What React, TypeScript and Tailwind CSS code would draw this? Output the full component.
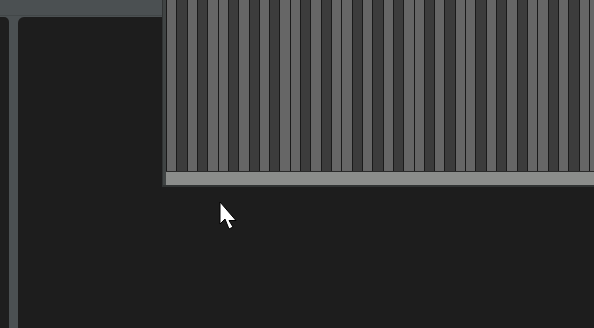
import React from "react";

const BLACK = [1, 3, 6, 8, 10];

export default function App() {
  const keys = Array.from({ length: 42 }, (_, i) => BLACK.includes(i % 12));
  return (
    <div className="relative flex h-[328px] w-[594px] overflow-hidden bg-[#1d1d1d]">
      {/* left column */}
      <div className="flex h-full w-[162px] shrink-0 flex-col bg-[#4b5052]">
        <div className="h-[15px] shrink-0" />
        <div className="h-[1px] shrink-0 bg-[#424748]" />
        <div className="flex flex-1 pt-[1px]">
          <div className="w-[9px] rounded-tr-[5px] bg-[#1e1e1e]" />
          <div className="w-[9px]" />
          <div className="flex-1 rounded-tl-[6px] bg-[#1d1d1d]" />
        </div>
      </div>

      {/* piano roll panel */}
      <div className="flex h-full flex-col">
        <div className="flex h-[187px] w-[437px] shrink-0 border-l border-b-2 border-[#303333] bg-[#404444] pl-[3px]">
          <div className="flex flex-1 flex-col">
            <div className="flex h-[171px]">
              {keys.map((black, i) => (
                <div
                  key={i}
                  className={
                    black
                      ? "flex-1 border-l border-[#1a1a1a] bg-[#3c3c3c]"
                      : "flex-1 border-l border-[#1a1a1a] bg-[#666666]"
                  }
                />
              ))}
            </div>
            <div className="h-[1px] bg-[#2a2a2a]" />
            <div className="h-[13px] bg-[#8b8d8b]" />
          </div>
        </div>
        <div className="flex-1" />
      </div>

      {/* mouse cursor */}
      <svg
        className="absolute left-[219px] top-[201px]"
        width="20"
        height="30"
        viewBox="0 0 20 30"
      >
        <path
          d="M1 1 L1 23 L6 18 L10 28 L14 26 L10 19.5 L17 19.5 Z"
          fill="#ffffff"
          stroke="#000000"
          strokeWidth="1"
          strokeLinejoin="miter"
        />
      </svg>
    </div>
  );
}
